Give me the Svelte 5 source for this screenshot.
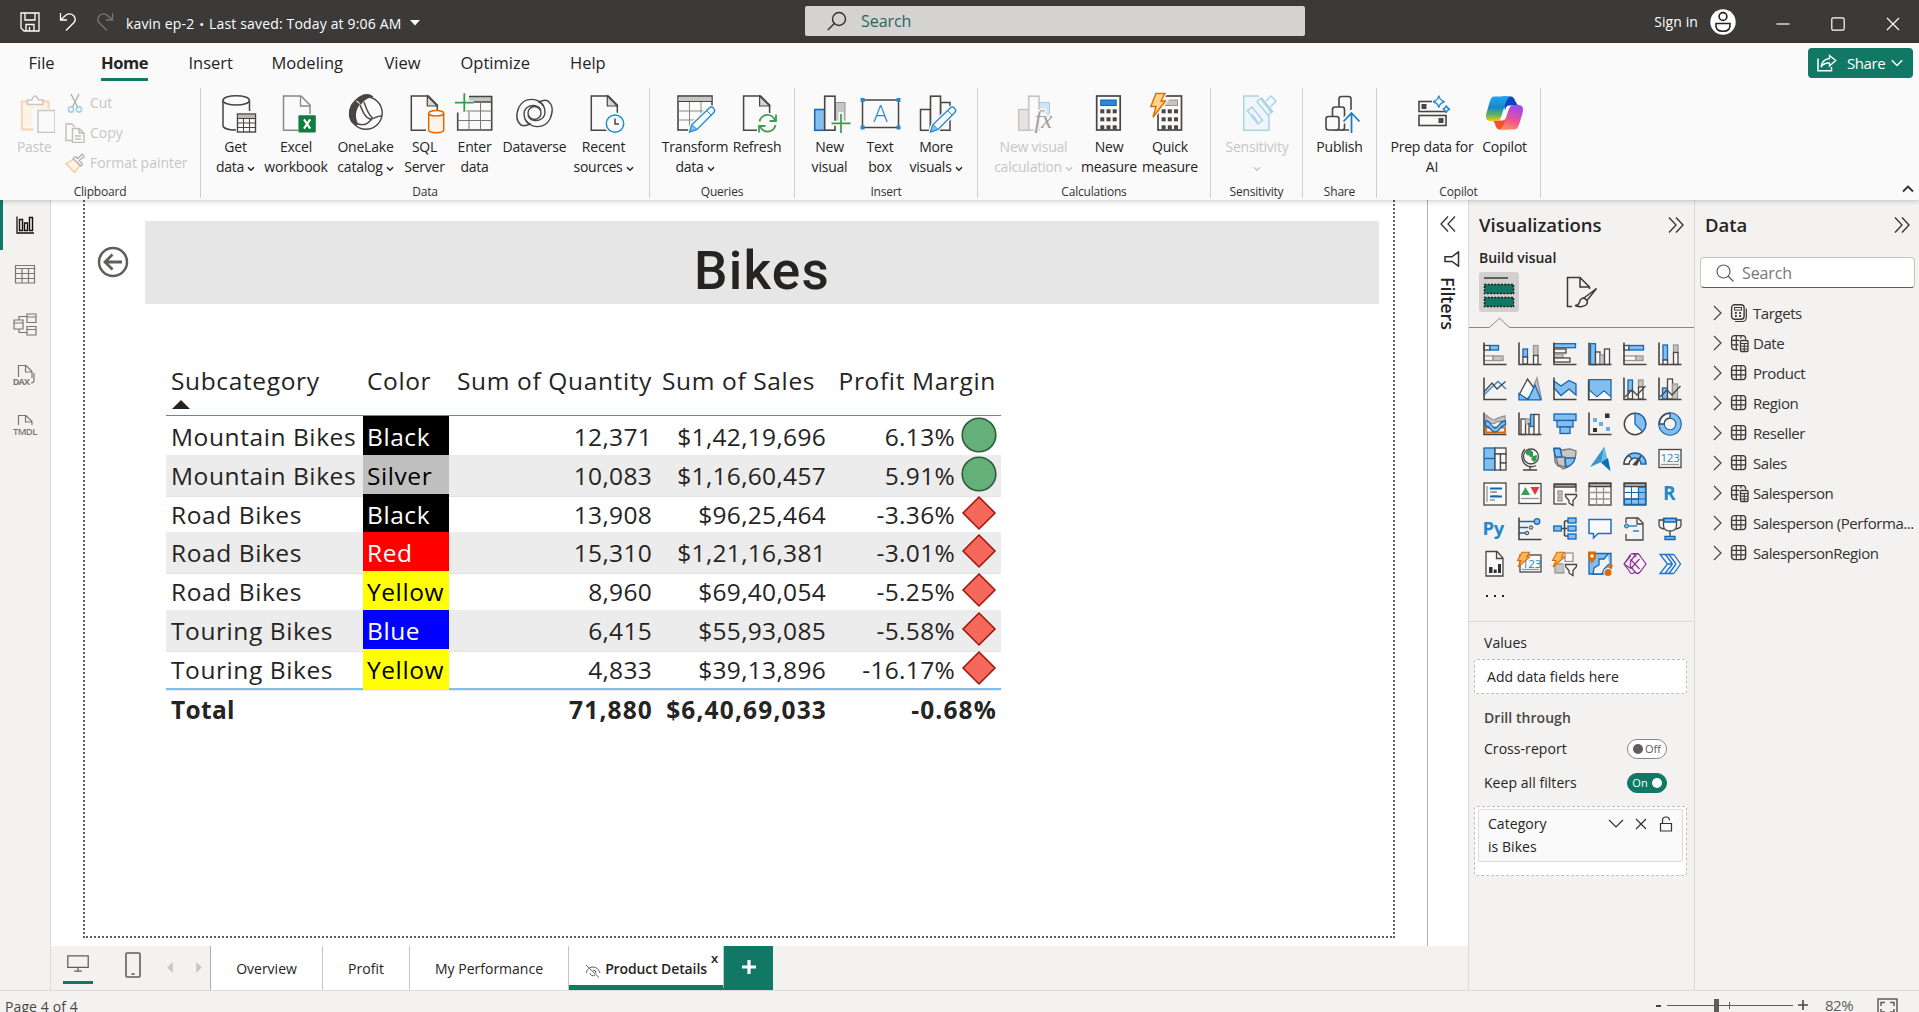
<script>
  const D = '#484644', B = '#1467b3', F = '#83beec', G = '#c8c6c4', N = '#979593', L = '#fafafa';
  const page = (x) => `<path d="M${x} 3H${x + 17}L${x + 26} 12V37.3H${x}Z" fill="${L}" stroke="${D}" stroke-width="1.5"/><path d="M${x + 16} 3V13H${x + 26}Z" fill="#d8d6d4" stroke="${D}" stroke-width="1.2"/>`;
  const pencil = `<path d="M14.5 39l2.5-7.5L34 15.2a3 3 0 0 1 4.6 4.6L22 36.5Z" fill="${L}" stroke="${L}" stroke-width="4"/><path d="M14.5 39l2.5-7.5L34 15.2a3 3 0 0 1 4.6 4.6L22 36.5Z" fill="${L}" stroke="#1e8bcd" stroke-width="1.3"/><path d="M14.5 39l2.5-7.5 5 5Z" fill="${F}" stroke="#1e8bcd"/><path d="M31.5 17.5l4.8 4.8" stroke="#1e8bcd"/>`;
  const calc = (x, w, c) => `<rect x="${x}" y="3" width="${w}" height="34" fill="${L}" stroke="${D}" stroke-width="1.7"/><rect x="${x + 4}" y="7" width="${w - 8}" height="5.5" fill="${c}" stroke="${c === G ? N : '#1267b4'}"/>` +
    [0, 1, 2].map(r => [0, 1, 2].map(k => `<rect x="${x + 3.6 + k * 6.2}" y="${16.3 + r * 8}" width="4" height="4" fill="${D}"/>`).join('')).join('');
  const bolt = `<path d="M6 0.5H15L11 8H15.5L3 24.3 6 13.5H0.8Z" fill="#fcd58a" stroke="#fafafa" stroke-width="4"/><path d="M6 0.5H15L11 8H15.5L3 24.3 6 13.5H0.8Z" fill="#fcd58a" stroke="#dd6b00" stroke-width="1.4"/>`;

  const ribbonIcons = {
    getdata: `<path d="M7 7.2V32.5c0 2.6 5 4.5 13 4.6M33.5 7.2V18" fill="none" stroke="${D}" stroke-width="1.5"/><ellipse cx="20.2" cy="7.4" rx="13.2" ry="4.7" fill="${L}" stroke="${D}" stroke-width="1.5"/><rect x="21.5" y="21" width="18" height="18" fill="${L}" stroke="${D}" stroke-width="1.4"/><path d="M22 22h17v3H22z" fill="#bbb"/><path d="M21.5 25.5h18M21.5 30h18M21.5 34.5h18M27.5 25v14M33.5 25v14" stroke="${D}"/>`,
    excel: `<path d="M22 37.3H7.5V3H25L34 12V21" fill="none" stroke="#8a8886" stroke-width="1.5"/><path d="M24.5 3V13H34" fill="none" stroke="#8a8886" stroke-width="1.3"/><rect x="22.4" y="22.2" width="17.4" height="17.4" rx="1" fill="#107c41"/><path d="M28 26.3l6.2 9.4M34.2 26.3L28 35.7" stroke="#fff" stroke-width="2.1"/>`,
    onelake: `<circle cx="20" cy="20" r="16.2" fill="${L}" stroke="${D}" stroke-width="1.4"/><path d="M10 6.5C15 .5 24-.8 27.5 4 22.5 4.5 17.5 7 15 12c-1.8-3.5-4-4-5-5.5Z" fill="${D}"/><path d="M10 8C4 12 .8 20 4.5 28 7 31.5 9.5 33 12.5 31.5 8.500 24 9.500 17.500 14 11 11.500 10 11.500 9 10 8Z" fill="${D}"/><path d="M14 12c3 7 5.500 13 10 14 5 0 7-3.500 12-3M18 9c2 6 4 12.500 8.500 16M12 31c8 2 10-1 14-5" fill="none" stroke="${D}" stroke-width="1.4"/>`,
    sql: page(6.3) + `<path d="M21 18h20v22H21z" fill="${L}"/><path d="M23.7 20v17c0 3.5 15 3.5 15 0V20" fill="#fbf4ec" stroke="#dd6b00" stroke-width="1.5"/><ellipse cx="31.2" cy="20.3" rx="7.5" ry="2.8" fill="${L}" stroke="#dd6b00" stroke-width="1.5"/>`,
    enter: `<rect x="2.7" y="3.5" width="34" height="33.5" fill="${L}"/><path d="M14 3.5H36.7V9H14z" fill="${G}"/><path d="M2.7 19.5V37H36.7V3.5H14M18 9H36.7" fill="none" stroke="${D}" stroke-width="1.6"/><path d="M2.7 27.5h34M10 18h26.7M14 19v18M25.5 9v28" stroke="#797775" fill="none"/><path d="M9.3.5v18.5M0 9.7h18.5" stroke="${L}" stroke-width="4"/><path d="M9.3.3v18.5M0 9.7h18.5" stroke="#2fa04b" stroke-width="1.8"/>`,
    dataverse: `<g fill="none" stroke="${D}" stroke-width="1.4"><circle cx="19.5" cy="20" r="6.5"/><path d="M28.5 13C24 5 10 3 4 14c-3 7-3 14 2 18 3 1.5 6 .5 9-1C8 28 7.5 18 12 14.5c5-3.5 12-2.5 14 3"/><path d="M10.5 27c4.5 8 18.5 10 24.5-1 3-7 3-14-2-18-3-1.5-6-.5-9 1 7 3 7.5 13 3 16.5-5 3.5-12 2.5-14-3"/></g>`,
    recent: page(7.3) + `<circle cx="31" cy="30.6" r="11" fill="${L}"/><circle cx="31" cy="30.6" r="8.7" fill="${L}" stroke="#1e8bcd" stroke-width="1.5"/><path d="M31 25.5v5.5h4" fill="none" stroke="${D}" stroke-width="1.5"/>`,
    transform: `<rect x="3" y="3" width="34" height="34" fill="${L}" stroke="${D}" stroke-width="1.6"/><path d="M3.5 4h33v4h-33z" fill="${G}"/><path d="M3 8.5h34" stroke="${D}"/><path d="M3 18h34M3 27h34M14.5 9v28M26 9v28" stroke="#8a8886"/><path d="M38 20v20H20z" fill="${L}"/>${pencil}`,
    refresh: page(6.6) + `<path d="M20 20h21v21H20z" fill="${L}"/><path d="M22.5 28.5a8 8 0 0 1 15.5-1M39 21.5v6.5h-6.5M38.5 32a8 8 0 0 1-15.5 1M22 39.5V33h6.5" fill="none" stroke="#3f9c52" stroke-width="1.8"/>`,
    newvisual: `<rect x="4.7" y="16.5" width="10" height="20.8" fill="${F}" stroke="${B}" stroke-width="1.5"/><rect x="25" y="9.5" width="10" height="20" fill="${G}" stroke="${N}"/><rect x="14.7" y="3.2" width="10.3" height="34" fill="${L}" stroke="${D}" stroke-width="1.6"/><path d="M31 19v22M20 30.3h22" stroke="${L}" stroke-width="5"/><path d="M31 21v19M21.5 30.3h19" stroke="#2fa04b" stroke-width="1.7"/>`,
    textbox: `<rect x="2.5" y="7" width="36" height="27.5" fill="${L}" stroke="${D}" stroke-width="1.5"/><text x="20.3" y="29" font-size="24" font-family="Open Sans" font-weight="300" text-anchor="middle" fill="#1e8bcd">A</text><path d="M.6 5h4v4h-4zM36.5 5h4v4h-4zM.6 32.5h4v4h-4zM36.5 32.5h4v4h-4z" fill="#1e8bcd"/>`,
    morevisuals: `<rect x="4.5" y="16.5" width="10" height="20.8" fill="${L}" stroke="${D}" stroke-width="1.5"/><path d="M24.5 9.5H34V37.2H24.5z" fill="${L}" stroke="${D}" stroke-width="1.5"/><rect x="14.5" y="3.2" width="10" height="34" fill="${L}" stroke="${D}" stroke-width="1.6"/>${pencil}`,
    newcalc: `<rect x="4.7" y="16.5" width="10.3" height="20.8" fill="#e5e4e3" stroke="${G}" stroke-width="1.5"/><rect x="25" y="9.5" width="10.5" height="14" fill="#cfe4f5" stroke="#a9cde6"/><rect x="14.7" y="3.2" width="10.3" height="34" fill="${L}" stroke="${G}" stroke-width="1.6"/><text x="20.5" y="34.5" font-size="25" font-family="Liberation Serif" font-style="italic" fill="#a19f9d" stroke="${L}" stroke-width="3" paint-order="stroke">fx</text>`,
    newmeasure: calc(7.7, 23.5, '#2b88d8'),
    quick: calc(8, 23.5, G) + bolt,
    sensitivity: `<path d="M22 3H6.700V37.300H32V22" fill="#eef6fb" stroke="#acd2e8" stroke-width="1.5"/><g fill="none" stroke="#acd2e8" stroke-width="1.5"><rect x="9.500" y="19.500" width="17" height="6" transform="rotate(52 18 22.500)"/><path d="M15 21.500l6 8"/><path d="M20 8.500l4.500-3.500 11 13.500-4.500 3.500ZM29 8l5-5 5 5-5.500 6" fill="#f3f9fc"/></g><path d="M23 6l2-1.500 10.500 13.500-2 1.500z" fill="#acd2e8"/>`,
    publish: `<g fill="${L}" stroke="${D}" stroke-width="1.6"><rect x="19" y="3.5" width="12" height="33.5" rx="2.5"/><rect x="12.5" y="14" width="12" height="23" rx="2.5"/><rect x="6" y="23.5" width="13" height="13.5" rx="2.5"/></g><path d="M31.5 17v23M22 29.500l9.500-9.500 9.500 9.500" fill="none" stroke="${L}" stroke-width="5"/><path d="M31.5 20v20M23.5 28.5l8-8.5 8 8.5" fill="none" stroke="#1a7fc1" stroke-width="1.8"/>`,
    prep: `<g fill="${L}" stroke="${D}" stroke-width="1.6"><rect x="7" y="8.5" width="27" height="10"/><rect x="7" y="22.5" width="27" height="10"/></g><path d="M9.5 11h5v5h-5zM26.5 25h5v5h-5z" fill="${D}"/><path d="M20 0h20v17.8H30L25 15h-5z" fill="${L}"/><path d="M26.8 2.7q1 5 5.8 6-4.8 1-5.8 6-1-5-5.8-6 4.8-1 5.8-6zM34.3 12.5q.6 3 3.6 3.700-3 .6-3.600 3.600-.6-3-3.600-3.600 3-.7 3.600-3.700z" fill="${L}" stroke="#2b8fd6" stroke-width="1.4"/>`,
    copilot: `<defs><linearGradient id="ca" x1="0" y1="0" x2="0" y2="1"><stop offset="0" stop-color="#1ba5f5"/><stop offset=".45" stop-color="#1988c8"/><stop offset=".75" stop-color="#5fb35a"/><stop offset="1" stop-color="#fbc80e"/></linearGradient><linearGradient id="cb" x1=".3" y1="0" x2="0" y2="1"><stop offset="0" stop-color="#a54be8"/><stop offset=".5" stop-color="#ee5097"/><stop offset="1" stop-color="#fd9d53"/></linearGradient></defs><path d="M17 3.5h9c4 0 4.5 8 8 9h-9c-4 0-4 2-5 5z" fill="#1145c0"/><path d="M23 36.5h-9c-4 0-3.5-9-7-9h9c4 0 5-2 6-5z" fill="#f2542d"/><path d="M9.5 3.5H25c-4 2-5 9-8 18-2 6-3 6.5-8 6.5H5.5C.5 28 .5 24 1.5 20l3-10.5C6 5 7 3.5 9.500 3.500Z" fill="url(#ca)"/><path d="M29 36.500H15c4-2 5-9 8-18 2-5.500 3-6.500 7-6.500h3.500c5 0 5 4 4 8.500L34.500 30C33 35 31.500 36.500 29 36.500Z" fill="url(#cb)"/>`,
  };

  const groups = [
    { name: 'Data', w: 449, pad: 6, items: [
      ['getdata', ['Get', 'data'], 57, 1], ['excel', ['Excel', 'workbook'], 64], ['onelake', ['OneLake', 'catalog'], 75, 1], ['sql', ['SQL', 'Server'], 43],
      ['enter', ['Enter', 'data'], 57], ['dataverse', ['Dataverse'], 63], ['recent', ['Recent', 'sources'], 75, 1]] },
    { name: 'Queries', w: 145, pad: 10, items: [['transform', ['Transform', 'data'], 70, 1], ['refresh', ['Refresh'], 54]] },
    { name: 'Insert', w: 183, pad: 8, items: [['newvisual', ['New', 'visual'], 53], ['textbox', ['Text', 'box'], 48], ['morevisuals', ['More', 'visuals'], 64, 1]] },
    { name: 'Calculations', w: 233, pad: 8, items: [['newcalc', ['New visual', 'calculation'], 95, 1, 1], ['newmeasure', ['New', 'measure'], 56], ['quick', ['Quick', 'measure'], 66]] },
    { name: 'Sensitivity', w: 92, pad: 0, items: [['sensitivity', ['Sensitivity', ''], 92, 1, 1]] },
    { name: 'Share', w: 74, pad: 0, items: [['publish', ['Publish'], 73]] },
    { name: 'Copilot', w: 164, pad: 10, items: [['prep', ['Prep data for', 'AI'], 90], ['copilot', ['Copilot'], 55]] },
  ];

  const tabs = [['File', 72.5], ['Home', 87.5], ['Insert', 83], ['Modeling', 113], ['View', 76], ['Optimize', 109.5], ['Help', 60]];

  const ax = `<path d="M1 .5V22.5H23.5" fill="none" stroke="${D}" stroke-width="1.6"/>`;
  const r = (x, y, w, h, f = L, s = D) => `<rect x="${x}" y="${y}" width="${w}" height="${h}" fill="${f}" stroke="${s}" stroke-width="1.3"/>`;
  const p = (d, f = 'none', s = D, w = 1.3) => `<path d="${d}" fill="${f}" stroke="${s}" stroke-width="${w}"/>`;
  const txt = (x, y, s, t, w = 400, a = 'middle', c = '#2488c8') => `<text x="${x}" y="${y}" font-size="${s}" font-weight="${w}" font-family="Open Sans" text-anchor="${a}" fill="${c}">${t}</text>`;
  const sbolt = `<path d="M4 .2H11.5L8.5 5H11.5L0 15 3 8.5H-.5Z" fill="#fbb65a" stroke="#dd6b00" stroke-width="1.1"/>`;
  const funnel = p('M12.5 12.5H23.5V14.5L20 18.5V23.5L16 21V18.5L12.5 14.5Z', L);
  const visuals = [
    r(1, 3.5, 6, 4.5) + r(7, 3.5, 8.5, 4.5, F, B) + r(1, 14, 9, 4.5, L, N) + r(10, 14, 10, 4.5, G, N) + ax,
    r(5, 7, 4.5, 8, F, B) + r(5, 15, 4.5, 7) + r(15.5, 3.5, 4.5, 10, G, N) + r(15.5, 13.5, 4.5, 9) + ax,
    r(1, 1.7, 21.5, 4, F, B) + r(1, 7, 12, 4) + r(1, 12, 9, 4, G, N) + r(1, 16, 16, 4) + ax,
    r(2.5, 1.7, 5, 21, F, B) + r(7.5, 10, 4.5, 12.5) + r(12, 13, 4.5, 9.5, G, N) + r(16.5, 7, 5, 15.5) + ax,
    r(1, 3.5, 5, 4.5) + r(6, 3.5, 14.5, 4.5, F, B) + r(1, 14, 12, 4.5, L, N) + r(13, 14, 7, 4.5, G, N) + ax,
    r(5, 3, 4.5, 15, F, B) + r(5, 18, 4.5, 4.5) + r(15.5, 3, 4.5, 7.5, G, N) + r(15.5, 10.5, 4.5, 12) + ax,
    p('M1 18L9 10 15 4.5 23 12', 'none', '#2b88d8') + p('M1 15L9 6 14 12 22.5 4.5') + ax,
    p('M16 8L19 1 23.5 22H14Z', G, N) + p('M1 18L9.5 2 18 14 9 22Z', L) + p('M1 16.5L10 22.5 17 8 23 22.8H1Z', F, B),
    p('M1 4L8 9 16 3.5 23 7V18L16 12 8 18.5 1 11Z', F, B) + ax,
    p('M1 2.7H23V20L16 14 9 20 1 13Z', F, B) + p('M1 13L9 20 16 14 23 20V22.5H1Z', L, B, 1) + p('M.6 3V22.7H23.5', 'none', D, 1.5),
    r(5, 3, 4.5, 11, F, B) + r(5, 14, 4.5, 8) + r(15.5, 3, 4.5, 7, G, N) + r(15.5, 10, 4.5, 12) + p('M2 20L9 13 14 18 22.5 9') + ax,
    r(4.5, 11, 5, 11, F, B) + r(9.5, 2, 5, 20) + r(14.5, 7, 5, 15, G, N) + p('M2 20L9 13 14 18 22.5 9') + ax,
    p('M3 15.5H22V20.5H3z', 'none', '#dd6b00', 1.8) + p('M3 3Q10 9 12 7.5T22 4V9Q14 9 12 11T3 9Z', G, N) + p('M2.5 9C8 8 8 16 12 16S16 9 22.5 9V13C17 13 17 20 12 20S8 14 2.5 14Z', F, B) + ax,
    r(3, 7, 4.5, 15.5) + r(7.5, 7, 5, 5, G, N) + r(12.5, 2.5, 4, 12, F, B) + r(16, 2.5, 5, 20) + p('M11 11V22') + ax,
    r(1, 2, 22, 6.5, F, B) + r(4, 8.5, 16, 6.5, F, B) + r(7, 15, 10, 6.5, F, B),
    `<path d="M5 6h4v4H5zM11 10h4v4h-4zM18 15h4v4h-4z" fill="#6aade4"/><path d="M17 1.5h4.5V6H17zM5 16h4v4H5z" fill="#323130"/>` + ax,
    `<circle cx="12" cy="12" r="10.7" fill="${L}" stroke="${D}" stroke-width="1.5"/>` + p('M12 1.3A10.7 10.7 0 0 1 19.5 19.6L12 12Z', F, B),
    `<circle cx="12" cy="12" r="8.5" fill="none" stroke="${B}" stroke-width="6.6"/><circle cx="12" cy="12" r="8.5" fill="none" stroke="${F}" stroke-width="4.3"/>` + p('M1.3 12A10.7 10.7 0 0 1 12 1.3V6A6 6 0 0 0 6 12Z', L),
    r(1, 1, 11, 22, F, B) + p('M1 11.5H12', 'none', B) + r(12, 1, 11, 6) + r(12, 7, 5.5, 16) + r(17.5, 7, 5.5, 9) + r(17.5, 16, 5.5, 7),
    `<circle cx="13" cy="9.5" r="7.5" fill="${L}" stroke="${D}" stroke-width="1.3"/><path d="M12 2.5c-5 1-5 5-2 6 1-1 2 1 2 2l3-1V5ZM15 9l4-1c0 4-1 6-3 7l-3-3Z" fill="#2f9a48"/>` + p('M7 2C2 7 3 17 11 19.5 13 20 15 20 18 18.5M12 20V23M5 23H19'),
    p('M1 1.5H6L9 3 17 2 23 4C23 15 17 20 10 22L8 20 5 19 2 15Z', G, '#797775') + p('M1 1.5H7L9 10H3Z', F, B) + p('M3 10H12V20L9 19 5 18Z', G, '#797775') + p('M12 11H22Q21 18 13 20ZM1 1.5H7L9 10H3Q1 6 1 1.5', F, B),
    `<path d="M16.5-.5L2 20 13.5 15Z" fill="#3a95c9"/><path d="M16.5-.5L13 15 22 24Z" fill="#60c0e6"/><path d="M13 15.5L20 11 22.5 24Z" fill="#0f6cbd"/>`,
    p('M1 17A11 11 0 0 1 23 17H18A6 6 0 0 0 6 17Z', F, B, 1.5) + p('M1 17A11 11 0 0 1 6 8.5L9 12A6 6 0 0 0 6 17Z', L) + p('M10.5 17.5L18 9 13.5 18Z', D),
    r(1, 2.5, 22, 18) + txt(12, 15, 11.5, '123') + p('M3 17.5H21', 'none', N),
    r(1, 1, 22, 22) + p('M4 4V20M9 14H15M9 10H14', 'none', N) + p('M7 6.5H19M7 14.5H19', 'none', B, 2) + p('M7 10H13M7 18H12', 'none', N),
    r(1, 1.5, 22, 20) + `<path d="M3 13L7.5 5 12 13Z" fill="#3f9c52"/><path d="M12.5 5H21.5L17 13Z" fill="#e03a3a"/>` + p('M3 16.5H21', 'none', N),
    r(1, 2, 22, 20) + p('M1.5 2.5H22.5V5H1.5Z', G) + r(5, 9, 4, 4, G, N) + r(5, 15, 4, 4, G, N) + p('M11 11H25V25H15Z', '#f3f2f1', '#f3f2f1') + funnel,
    r(1, 1, 22, 22) + p('M1.5 1.5H22.5V4.5H1.5Z', G) + p('M1 10.5H23M1 17H23M8.5 5V23M15.5 5V23', 'none', N),
    r(1, 1, 22, 22) + p('M15.5 5H22.5V22.5H1.5V17H15.5Z', F, B) + p('M1.5 1.5H22.5V4.5H1.5Z', G) + p('M1 10.5H23M1 17H23M8.5 5V23M15.5 5V23', 'none', B, 1),
    txt(11, 18, 19, 'R', 700),
    txt(-0.5, 17.5, 18.5, 'Py', 700, 'start'),
    p('M1 4.5H16M1 10.5H10M1 16H7', 'none', B) + `<circle cx="19" cy="4.5" r="2.8" fill="${F}" stroke="${B}" stroke-width="1.3"/><circle cx="13" cy="10.5" r="1.8" fill="${G}" stroke="${D}"/><circle cx="9" cy="16" r="1.8" fill="${G}" stroke="${D}"/>` + ax,
    p('M8 11.5H14M11.5 4V19M11.5 4H16M11.5 19H16', 'none', D, 1.6) + r(0.8, 9, 7.5, 5, F, B) + r(15, 1, 8, 5, F, B) + r(15, 9, 8, 5, F, B) + r(15, 17, 8, 5, F, B),
    p('M1 2.5H23V16.5H10L5.5 21V16.5H1Z', L, '#1e6fc0', 1.5),
    p('M3 1H15L20 6V23H3V17M3 6V1M14 1V7H20') + p('M6 9H14M10 14H16M3 9H1', 'none', '#1e8bcd', 1.5) + `<circle cx="3.5" cy="9" r="2" fill="${F}" stroke="${B}"/>`,
    p('M5 3H1V8Q1 11 6 12M19 3H23V8Q23 11 18 12') + p('M5.5 1.5H18.5V9Q18 14 12 14 6 14 5.5 9Z', L) + p('M6 1.5H18V5H6z', F, B) + p('M12 14V20') + p('M7 19.5H17V22.5H7z', F, B),
    p('M3 -.5H14L20 6V24H3ZM13.5 -.5V6.5H20', L) + `<path d="M6 15h3.5v6H6zM10.7 17.5h3v3.5h-3zM15 12h3v9h-3z" fill="#323130"/>`,
    r(2, 3, 21, 17) + txt(13.5, 15.5, 11.5, '123') + p('M4 17.5H21', 'none', N) + sbolt,
    r(12, 1, 8, 8.500, L, N) + r(2, 12, 9, 9, G, N) + p('M11 11H25V25H13Z', '#f3f2f1', '#f3f2f1') + funnel + sbolt,
    p('M1 1.5H23V22H1Z', F, B) + p('M20 2L16 7H11V13L6 16 5 22H14L16 17 21 12', '#f3f2f1', B) + `<path d="M0 -.5H8V6L4 11.5 0 6Z" fill="#dd6b00"/><circle cx="4" cy="4" r="1.7" fill="#fff"/><circle cx="20" cy="20.5" r="4.500" fill="#f3f2f1"/><circle cx="20" cy="20.5" r="3.5" fill="#dd6b00"/><circle cx="22.5" cy="14" r="2.2" fill="#dd6b00"/>`,
    `<g fill="#f8f2f9" stroke="#8b2f95" stroke-width="1.2"><path d="M9.500 1.500L15 1.500 17 4 7 16 1 12ZM1 12L7.500 2.500 M1 12L8 21.500H10L12.500 19.500"/><path d="M7.500 2.500Q9 1 11 2.500L16.500 9.500 12 15 M16 2.500Q14.500 1 13 2.500L7.500 9 16.500 20.500"/><path d="M16 2.500L23 12 16.500 20.500Q14.500 22.500 12.500 20.500L7.500 14.500Q6.500 12 8 10.500"/><path d="M7.500 7.500L12 12 7.500 17M16.500 7L12 12 16.500 17" fill="none"/></g>`,
    `<g fill="none" stroke="#1a73cf" stroke-width="1.300"><path d="M2 2.500H15Q16 2.500 17 4L22.500 12 17 20Q16 21.500 15 21.500H2L9.500 12Z"/><path d="M7.500 2.500L14.500 12M11 2.500L18 12M14.500 12L7 21.500M18 12L11 21.500M9.500 12H14.500"/></g>`,
  ];

  const rows = [
    ['Mountain Bikes', 'Black', '12,371', '$1,42,19,696', '6.13%', true],
    ['Mountain Bikes', 'Silver', '10,083', '$1,16,60,457', '5.91%', true],
    ['Road Bikes', 'Black', '13,908', '$96,25,464', '-3.36%', false],
    ['Road Bikes', 'Red', '15,310', '$1,21,16,381', '-3.01%', false],
    ['Road Bikes', 'Yellow', '8,960', '$69,40,054', '-5.25%', false],
    ['Touring Bikes', 'Blue', '6,415', '$55,93,085', '-5.58%', false],
    ['Touring Bikes', 'Yellow', '4,833', '$39,13,896', '-16.17%', false],
  ];

  const fields = [['Targets', 'm'], ['Date', 'c'], ['Product', 't'], ['Region', 't'], ['Reseller', 't'], ['Sales', 't'], ['Salesperson', 'c'], ['Salesperson (Performa...', 't'], ['SalespersonRegion', 't']];
  const K = '#3b3a39';
  const fieldIcons = {
    t: `<rect x="1.6" y="1.6" width="14" height="14" rx="3" fill="none" stroke="${K}" stroke-width="1.4"/><path d="M6.3 1.5v14M10.9 1.5v14M1.5 6.3h14M1.5 10.9h14" stroke="${K}" stroke-width="1.2"/>`,
    c: `<path d="M8 15.6H4.6a3 3 0 0 1-3-3V4.6a3 3 0 0 1 3-3h8a3 3 0 0 1 3 3V5.5M6.3 1.5v14M10.9 1.5v3M1.5 6.3h8M1.5 10.9h7" fill="none" stroke="${K}" stroke-width="1.3"/><rect x="10.5" y="6.5" width="7.5" height="11" rx="1" fill="#f3f2f1" stroke="${K}" stroke-width="1.3"/><path d="M11 9.5h7M11 12.3h7M11 15h7M14.3 9.5v8" stroke="${K}" stroke-width="1.1"/>`,
    m: `<rect x="1.6" y=".8" width="12.5" height="14.5" rx="3" fill="none" stroke="${K}" stroke-width="1.4"/><rect x="4.5" y="3.5" width="7" height="2.6" fill="none" stroke="${K}"/><path d="M5 9h1.8M9.2 9H11M5 12h1.8M9.2 12H11" stroke="${K}" stroke-width="1.8"/><path d="M16.3 4.5v9a4 4 0 0 1-4 4H5" fill="none" stroke="${K}" stroke-width="1.2"/>`,
  };
  const pagesList = [['Overview', 112], ['Profit', 87], ['My Performance', 159]];
</script>

{#snippet chev(cls)}<svg class="chev {cls}" viewBox="0 0 8 6"><path d="M1 1.2l3 3 3-3" fill="none" stroke="currentColor" stroke-width="1.5" /></svg>{/snippet}

<div class="app">
  <header class="title">
    <div class="quick">
      <svg class="save" viewBox="0 0 20 20"><path d="M1 1H19V19H4L1 16ZM5 1V8H15V1M6 19V12.5H14V19M9.5 15V19" fill="none" stroke="#fff" stroke-width="1.3" /></svg>
      <svg class="undo" viewBox="0 0 18 20"><path d="M1.5 1V8H8M1.5 8L7 3Q11 .5 14.5 3.5 18 7.5 14.5 11L7 18.5" fill="none" stroke="#fff" stroke-width="1.3" /></svg>
      <svg class="redo" viewBox="0 0 18 20"><path d="M16.5 1V8H10M16.5 8L11 3Q7 .5 3.5 3.5 0 7.5 3.5 11L11 18.5" fill="none" stroke="#797775" stroke-width="1.3" /></svg>
      <span class="file">kavin ep-2 <i>•</i> Last saved: Today at 9:06 AM</span>
      <svg class="caret" viewBox="0 0 10 6"><path d="M0 0H10L5 5.5Z" fill="#fff" /></svg>
    </div>
    <div class="tsearch">
      <svg viewBox="0 0 20 20"><circle cx="12" cy="8" r="6.5" fill="none" stroke="#323130" stroke-width="1.4" /><path d="M7.3 12.5L.8 19" stroke="#323130" stroke-width="1.4" /></svg>
      <span>Search</span>
    </div>
    <div class="win">
      <span>Sign in</span>
      <svg class="avatar" viewBox="0 0 26 26"><circle cx="13" cy="13" r="12.7" fill="#fff" /><circle cx="13" cy="7.5" r="3.9" fill="none" stroke="#252423" stroke-width="1.6" /><path d="M6 14.5H20Q21 22.3 13 22.3 5 22.3 6 14.5Z" fill="none" stroke="#252423" stroke-width="1.6" /></svg>
      <svg class="wmin" viewBox="0 0 14 14"><path d="M.5 7H13.5" stroke="#fff" stroke-width="1.2" /></svg>
      <svg class="wmax" viewBox="0 0 14 14"><rect x=".8" y=".8" width="12.4" height="12.4" rx="1.5" fill="none" stroke="#fff" stroke-width="1.2" /></svg>
      <svg class="wclose" viewBox="0 0 14 14"><path d="M1 1L13 13M13 1L1 13" stroke="#fff" stroke-width="1.2" /></svg>
    </div>
  </header>

  <div class="top">
    <nav class="tabs">
      {#each tabs as [t, w]}
        <div class="tab" style:width="{w}px"><span class:on={t === 'Home'}>{t}</span></div>
      {/each}
      <button class="share">
        <svg class="shicon" viewBox="0 0 20 18"><path d="M1 4.5V16.8H14.5V13" fill="none" stroke="#fff" stroke-width="1.5" /><path d="M12.5 1.5L18.7 6.5 12.5 12V9Q7 8.5 4 13 5 5.5 12.5 4.5Z" fill="none" stroke="#fff" stroke-width="1.4" /></svg>
        <span>Share</span>
        <svg class="shchev" viewBox="0 0 12 8"><path d="M.8 1.2L6 6.5 11.2 1.2" fill="none" stroke="#fff" stroke-width="1.4" /></svg>
      </button>
    </nav>

    <div class="ribbon">
      <section class="clip">
        <div class="clipbody">
          <div class="paste">
            <svg viewBox="0 0 40 40"><path d="M18 36.5H7V8.5H33.5V16" fill="none" stroke="#f7d9b8" stroke-width="2.4" /><path d="M8.5 10H32v6H17v18H8.5z" fill="#fbf3e6" /><path d="M12.5 11.5V7H17Q18 3 20 3T23.5 7H28V11.5Z" fill="#fafafa" stroke="#c8c6c4" stroke-width="1.4" /><rect x="23" y="17.5" width="17" height="22" fill="#fafafa" stroke="#c8c6c4" stroke-width="1.5" /></svg>
            <span>Paste</span>
          </div>
          <div class="cmds">
            <div><svg viewBox="0 0 20 20"><path d="M6 1L12.5 14M14 1L7.5 14" stroke="#b3b0ad" stroke-width="1.4" /><circle cx="6" cy="16.5" r="2.6" fill="none" stroke="#a6cfe6" stroke-width="1.6" /><circle cx="14" cy="16.5" r="2.6" fill="none" stroke="#a6cfe6" stroke-width="1.6" /></svg>Cut</div>
            <div><svg viewBox="0 0 20 20"><path d="M7 17.5H1V1H7L10 4" fill="none" stroke="#c0bebc" stroke-width="1.4" /><path d="M7.5 5.5H14L19 10V19.5H7.5ZM14 5.5V10H19M10 13h6M10 16h6" fill="none" stroke="#c0bebc" stroke-width="1.4" /></svg>Copy</div>
            <div><svg viewBox="0 0 20 20"><path d="M1 10.5Q6 9 8.5 6L15 12.5Q12 16 9.5 19.5Z" fill="#fdf3e7" stroke="#f3cda3" stroke-width="1.4" /><path d="M8 5.5L16 13 17.5 11 14 7.5 19 3.5 17.5 1 12.5 5.5 10.5 3.5Z" fill="#fafafa" stroke="#b3b0ad" stroke-width="1.3" /></svg>Format painter</div>
          </div>
        </div>
        <h6>Clipboard</h6>
      </section>
      {#each groups as g}
        <section class="grp" style:width="{g.w}px">
          <div class="items" style:padding-left="{g.pad}px">
            {#each g.items as [icon, lines, w, drop, off]}
              <div class="btn" class:off style:width="{w}px">
                <svg class="ico" viewBox="0 0 40 40">{@html ribbonIcons[icon]}</svg>
                <span>{lines[0]}</span>
                {#if lines.length > 1}<span>{lines[1]}{#if drop}{@render chev(lines[1] ? '' : 'solo')}{/if}</span>{/if}
              </div>
            {/each}
          </div>
          <h6>{g.name}</h6>
        </section>
      {/each}
      <svg class="collapse" viewBox="0 0 12 8"><path d="M1 6.5L6 1.5 11 6.5" fill="none" stroke="#323130" stroke-width="1.9" /></svg>
    </div>
  </div>

  <div class="main">
    <aside class="rail">
      <div class="mode active"><svg viewBox="0 0 24 24"><path d="M4 3.5V20H21" fill="none" stroke="#111" stroke-width="1.3" /><path d="M6.5 6.5h3v11h-3zM11.5 10h3v7.5h-3zM16.5 4.5h3v13h-3z" fill="none" stroke="#111" stroke-width="1.4" /></svg></div>
      <div class="mode"><svg viewBox="0 0 24 24"><path d="M2.5 2.500h19v17.500h-19zM2.500 5.500h19M2.500 10.500h19M2.500 15.500h19M9 5.500v14.500M15.500 5.500v14.500" fill="none" stroke="#797775" stroke-width="1.2" /></svg></div>
      <div class="mode"><svg viewBox="0 0 24 24"><path d="M1 7h9v9H1zM1 10h9M14 1h9v8.500h-9zM14 4h9M14 13.500h9v8.500h-9zM14 16.500h9M6 7V3.500h8M6 16V19.500h8" fill="none" stroke="#797775" stroke-width="1.2" /></svg></div>
      <div class="mode"><svg viewBox="0 0 24 24"><path d="M5.5 14V2.5H13L19 8.5V15M12.5 2.5V9H19M21 10v7q0 3-3 3" fill="none" stroke="#797775" stroke-width="1.2" /><text x="-.3" y="21.5" font-size="9" font-weight="700" font-family="Open Sans" fill="#797775" textLength="17">DAX</text></svg></div>
      <div class="mode"><svg viewBox="0 0 24 24"><path d="M5.5 12V2.5H13L19 8.5V12M12.5 2.5V9H19" fill="none" stroke="#797775" stroke-width="1.2" /><text x="0" y="22" font-size="9.500" font-weight="600" font-family="Open Sans" fill="#797775" textLength="24">TMDL</text></svg></div>
    </aside>

    <div class="center">
      <div class="stage">
        <div class="canvas">
          <div class="headrow">
            <svg class="back" viewBox="0 0 32 32"><circle cx="16" cy="16" r="14" fill="none" stroke="#605e5c" stroke-width="2.5" /><path d="M25 16H8M15.5 8.5L8 16l7.5 7.5" fill="none" stroke="#605e5c" stroke-width="2.8" /></svg>
            <h1>Bikes</h1>
          </div>
          <div class="table">
            <div class="tr th">
              <div>Subcategory<svg class="sort" viewBox="0 0 18 9"><path d="M0 9L9 0 18 9Z" fill="#252423" /></svg></div>
              <div class="hc">Color</div><div class="n">Sum of Quantity</div><div class="s">Sum of Sales</div><div class="n">Profit Margin</div>
            </div>
            {#each rows as [sub, color, qty, sales, margin, good]}
              <div class="tr">
                <div>{sub}</div><div class="c {color.toLowerCase()}">{color}</div><div class="n d">{qty}</div><div class="n d">{sales}</div>
                <div class="n m d">{margin}<svg viewBox="0 0 36 36">{#if good}<circle cx="18" cy="18" r="16.8" fill="#64b078" stroke="#2e5c3c" stroke-width="1.6" />{:else}<path d="M18 2L34 18 18 34 2 18Z" fill="#f4695c" stroke="#a31208" stroke-width="1.5" />{/if}</svg></div>
              </div>
            {/each}
            <div class="tr total"><div>Total</div><div></div><div class="n">71,880</div><div class="n">$6,40,69,033</div><div class="n">-0.68%</div></div>
          </div>
        </div>
        <div class="filters">
          <svg class="dbl" viewBox="0 0 16 16"><path d="M8 .5L1 8l7 7.5M15 .5L8 8l7 7.5" fill="none" stroke="#323130" stroke-width="1.3" /></svg>
          <svg class="fun" viewBox="0 0 16 16"><path d="M14.5 .8V15.2L8 10.5H1V5.8H8Z" fill="none" stroke="#323130" stroke-width="1.5" /></svg>
          <span>Filters</span>
        </div>
      </div>
      <div class="pages">
        <div class="views">
          <svg class="mon" viewBox="0 0 26 20"><path d="M1 1H25V14.5H1ZM13 14.5V19M8.5 19H17.5" fill="none" stroke="#605e5c" stroke-width="1.5" /></svg>
          <svg class="phone" viewBox="0 0 16 26"><rect x="1" y="1" width="14" height="24" rx="1" fill="none" stroke="#605e5c" stroke-width="1.6" /><path d="M6.5 22h3" stroke="#605e5c" stroke-width="1.6" /></svg>
          <svg class="arr" viewBox="0 0 6 12"><path d="M6 0V12L0 6Z" fill="#c8c6c4" /></svg>
          <svg class="arr2" viewBox="0 0 6 12"><path d="M0 0V12L6 6Z" fill="#c8c6c4" /></svg>
        </div>
        {#each pagesList as [n, w]}<div class="pg" style:width="{w}px">{n}</div>{/each}
        <div class="pg cur">
          <svg viewBox="0 0 16 14"><path d="M1 9Q3 3 8 3T15 9M1 1L14 13.5M5 9a3 3 0 0 0 5 2M8 6a3 3 0 0 1 3 3" fill="none" stroke="#605e5c" stroke-width="1" /></svg>Product Details<b>x</b>
        </div>
        <div class="add"><svg viewBox="0 0 14 14"><path d="M7 0V14M0 7H14" stroke="#fff" stroke-width="3.2" /></svg></div>
      </div>
    </div>

    <aside class="viz">
      <div class="ph"><h2>Visualizations</h2><svg class="dbl" viewBox="0 0 16 16"><path d="M1 .5L8 8l-7 7.5M8 .5L15 8l-7 7.5" fill="none" stroke="#323130" stroke-width="1.3" /></svg></div>
      <h3>Build visual</h3>
      <div class="modes">
        <div class="build"><svg viewBox="0 0 32 32"><path d="M1 2H25" stroke="#252423" stroke-width="1.3" /><path d="M1.5 8.5h29v9h-29zM1.5 21.5h29v9h-29z" fill="#117865" stroke="#111" stroke-width="1.5" stroke-dasharray="2 1.3" /></svg></div>
        <svg class="fmt" viewBox="0 0 32 32"><path d="M6 30.5H1.5V1.5H14L23.5 11V13M14 1.5V11H23.5" fill="none" stroke="#3b3a39" stroke-width="1.5" /><path d="M30.5 12.5L21 24.5 18 22Z" fill="#f3f2f1" stroke="#3b3a39" stroke-width="1.5" /><path d="M18 22Q14.5 22 13.5 26 12.5 29.5 9 29.5 16 32 20 29 22 27 21 24.5Z" fill="#f3f2f1" stroke="#3b3a39" stroke-width="1.5" /></svg>
      </div>
      <svg class="notch" viewBox="0 0 225 12"><path d="M0 10.5H20.5L30.5 1.2 40.5 10.5H225" fill="none" stroke="#8a8886" stroke-width="1" /></svg>
      <div class="grid">
        {#each visuals as v}<svg viewBox="0 0 24 24">{@html v}</svg>{/each}
      </div>
      <div class="dots"><i></i><i></i><i></i></div>
      <div class="wells">
        <p class="vals">Values</p>
        <div class="well">Add data fields here</div>
        <p class="drill">Drill through</p>
        <div class="opt">Cross-report<span class="tog"><i></i>Off</span></div>
        <div class="opt second">Keep all filters<span class="tog on">On<i></i></span></div>
        <div class="well big">
          <div class="card">
            <div class="cn"><span>Category</span>
              <svg class="c1" viewBox="0 0 16 9"><path d="M1 1L8 8 15 1" fill="none" stroke="#323130" stroke-width="1.2" /></svg>
              <svg class="c2" viewBox="0 0 12 12"><path d="M1 1L11 11M11 1L1 11" stroke="#323130" stroke-width="1.2" /></svg>
              <svg class="c3" viewBox="0 0 14 16"><path d="M1.5 7.5H12.5V15H1.5ZM3.5 7V4.5Q3.5 1 7 1T10.5 4.5" fill="none" stroke="#323130" stroke-width="1.2" /></svg>
            </div>
            <div>is Bikes</div>
          </div>
        </div>
      </div>
    </aside>

    <aside class="data">
      <div class="ph"><h2>Data</h2><svg class="dbl" viewBox="0 0 16 16"><path d="M1 .5L8 8l-7 7.5M8 .5L15 8l-7 7.5" fill="none" stroke="#323130" stroke-width="1.3" /></svg></div>
      <div class="dsearch"><svg viewBox="0 0 18 18"><circle cx="7.5" cy="7.5" r="6.5" fill="none" stroke="#605e5c" stroke-width="1.2" /><path d="M12 12L17.5 17.5" stroke="#605e5c" stroke-width="1.3" /></svg>Search</div>
      {#each fields as [n, k]}
        <div class="field">
          <svg class="fc" viewBox="0 0 9 16"><path d="M1 1l7 7-7 7" fill="none" stroke="#484644" stroke-width="1.2" /></svg>
          <svg class="fi" viewBox="0 0 18 18">{@html fieldIcons[k]}</svg>{n}
        </div>
      {/each}
    </aside>
  </div>

  <footer>
    <span>Page 4 of 4</span>
    <div class="zoom">
      <b class="minus"></b>
      <svg class="slider" viewBox="0 0 126 16"><path d="M0 7.5H126M62.5 4V11" stroke="#605e5c" /><path d="M47 1h5v15h-5z" fill="#605e5c" /></svg>
      <svg class="plus" viewBox="0 0 10 10"><path d="M5 0V10M0 5H10" stroke="#484644" stroke-width="1.6" /></svg>
      <span class="pct">82%</span>
      <svg class="fit" viewBox="0 0 21 18"><path d="M1 1H20V17H1ZM4 8V4.5H8M13 4.5H17V8M4 11V14H8M13 14H17V11" fill="none" stroke="#605e5c" stroke-width="1.5" /></svg>
    </div>
  </footer>
</div>

<style>
  :global(body) { margin: 0; overflow: hidden; }
  * { box-sizing: border-box; }
  .app { width: 1919px; height: 1012px; display: flex; flex-direction: column; overflow: hidden; background: #f3f2f1; color: #252423; font: 14px/20px "Open Sans", "Noto Sans", sans-serif; letter-spacing: -0.3px; }
  svg { display: block; flex: none; }
  h1, h2, h3, h6, p { margin: 0; }

  .title { height: 43px; flex: none; background: #3b3a39; color: #fff; display: flex; align-items: center; }
  .quick { width: 805px; display: flex; align-items: center; padding-left: 20px; }
  .save { width: 20px; height: 20px; }
  .undo { width: 18px; height: 20px; margin-left: 19px; }
  .redo { width: 18px; height: 20px; margin-left: 19px; }
  .file { margin-left: 12px; width: 276px; white-space: nowrap; padding-top: 5px; letter-spacing: 0.16px; }
  .file i { font-style: normal; font-size: 13px; margin: 0 1px; }
  .caret { width: 10px; height: 6px; margin: 3px 0 0 8px; }
  .tsearch { width: 500px; height: 30px; background: #d4d3d1; border-radius: 2px; color: #2a675b; display: flex; align-items: center; padding-left: 22px; gap: 14px; font-size: 16px; letter-spacing: -0.05px; margin-bottom: 1px; }
  .tsearch svg { width: 20px; height: 20px; }
  .win { margin-left: auto; display: flex; align-items: center; padding-right: 19px; letter-spacing: 0.1px; }
  .avatar { width: 26px; height: 26px; margin-left: 12px; }
  .wmin, .wmax, .wclose { width: 14px; height: 14px; margin: 4px 0 0 41px; }
  .wmin { margin-left: 40px; }

  .top { height: 157px; flex: none; background: #fafafa; position: relative; z-index: 2; box-shadow: 0 1px 5px rgba(0, 0, 0, .22); }
  .tabs { height: 45px; display: flex; padding-left: 28.5px; font-size: 16.5px; letter-spacing: 0; }
  .tab { padding-top: 10px; }
  .tab span { display: inline-block; height: 28px; white-space: nowrap; }
  .tab .on { font-weight: 700; letter-spacing: -0.4px; border-bottom: 3px solid #117865; }
  .share { margin: 5px 6px 0 auto; width: 105px; height: 30px; border: 0; border-radius: 4px; background: #117865; color: #fff; display: flex; align-items: center; padding: 0 0 0 9px; font: 15px "Open Sans", sans-serif; letter-spacing: -0.4px; }
  .shicon { width: 20px; height: 18px; margin-right: 10px; }
  .share span { width: 37px; }
  .shchev { width: 12px; height: 8px; margin-left: 7px; }

  .ribbon { height: 110px; display: flex; }
  .ribbon section { height: 110px; border-right: 1px solid #d2d0ce; display: flex; flex-direction: column; justify-content: space-between; align-items: center; }
  h6 { font-size: 12px; font-weight: 400; line-height: 13px; letter-spacing: -0.2px; color: #323130; }
  .clip { width: 201px; }
  .clipbody { display: flex; width: 200px; height: 90px; color: #c8c6c4; }
  .paste { width: 63px; padding-left: 15px; display: flex; flex-direction: column; }
  .paste svg { width: 40px; height: 40px; margin: 5px 0 4px 0; }
  .paste span { margin-left: 2px; }
  .cmds { display: flex; flex-direction: column; }
  .cmds div { height: 30px; flex: none; display: flex; align-items: center; gap: 5px; white-space: nowrap; letter-spacing: -0.02px; }
  .cmds svg { width: 20px; height: 20px; margin-left: 2px; }
  .grp { align-items: stretch; }
  .grp h6 { text-align: center; }
  .items { display: flex; width: 100%; }
  .btn { display: flex; flex-direction: column; align-items: center; flex: none; letter-spacing: -0.22px; }
  .btn .ico { width: 40px; height: 40px; margin: 5px 0 4px; overflow: visible; }
  .btn span { white-space: nowrap; display: flex; align-items: center; height: 20px; }
  .chev { width: 8px; height: 6px; margin: 3px 0 0 3px; }
  .chev.solo { margin-left: 0; }
  .off { color: #c8c6c4; }
  .collapse { width: 12px; height: 8px; margin: 97px 0 0 361px; }

  .main { height: 790px; flex: none; display: flex; }
  .rail { width: 51px; border-right: 1px solid #dddbda; }
  .mode { height: 50px; border-left: 3px solid transparent; padding: 13px 0 0 10px; }
  .mode.active { border-color: #117865; }
  .mode svg { width: 24px; height: 24px; overflow: visible; }

  .center { width: 1417px; display: flex; flex-direction: column; }
  .stage { height: 746px; display: flex; background: #fff; }
  .canvas { width: 1312px; height: 738px; margin-left: 32px; border: 2px dotted #605e5c; border-top: 0; padding: 21px 0 0 12px; }
  .headrow { display: flex; }
  .back { width: 32px; height: 32px; margin: 25px 16px 0 0; }
  h1 { width: 1234px; height: 83px; background: #e6e6e6; text-align: center; font: 500 53px/100px Roboto, sans-serif; letter-spacing: 1.2px; color: #252423; }
  .table { width: 835px; margin: 56px 0 0 69px; font-size: 24.5px; line-height: 38.9px; letter-spacing: 0.58px; }
  .tr { display: grid; grid-template-columns: 197px 86px 208px 174px 170px; height: 38.8px; color: #252423; }
  .tr > div { padding: 2px 6px 0; white-space: nowrap; height: 100%; border-bottom: 1px solid #ebebeb; }
  .tr > div:first-child { padding-left: 5px; }
  .tr:nth-child(odd) > div { background: #ececec; border-color: #e3e3e3; }
  .tr.th { height: 56px; border-bottom: 1px solid #2e93f5; }
  .tr.th > div { background: none; border: 0; padding-top: 2px; letter-spacing: 0.63px; }
  .tr.th > .hc { padding-left: 4px; }
  .sort { width: 18px; height: 9px; margin: -1px 0 0 1px; }
  .tr .n { text-align: right; padding-right: 5px; }
  .tr .s { text-align: left; padding-left: 5px; }
  .tr > .d { letter-spacing: 0.3px; }
  .tr > .m { display: flex; justify-content: flex-end; }
  .m svg { width: 36px; height: 36px; margin: -1px -1px 0 6px; }
  .tr > .c { padding-left: 4px; }
  .tr > .black { background: #000 !important; color: #fff; }
  .tr > .silver { background: #c0c0c0 !important; color: #000; }
  .tr > .red { background: #f00 !important; color: #fff; }
  .tr > .yellow { background: #ff0 !important; color: #000; }
  .tr > .blue { background: #00f !important; color: #fff; }
  .tr.total { font-weight: 700; border-top: 2px solid #7cc0f8; }
  .tr.total > div { background: none; border: 0; padding-top: 1px; letter-spacing: 0.3px; }
  .tr.total > .n { letter-spacing: 1.15px; padding-right: 4px; }

  .filters { margin-left: auto; width: 41px; border-left: 1px solid #b3b0ad; display: flex; flex-direction: column; align-items: center; padding-top: 16px; }
  .dbl { width: 16px; height: 16px; }
  .fun { width: 16px; height: 16px; margin: 19px 0 10px 7px; }
  .filters span { writing-mode: vertical-rl; font-size: 18px; font-weight: 600; letter-spacing: -0.1px; }

  .pages { height: 44px; display: flex; letter-spacing: 0; }
  .views { width: 160px; border-right: 1px solid #b3b0ad; display: flex; align-items: flex-start; }
  .mon { width: 30px; height: 38px; margin-left: 12px; padding: 9px 2px 9px; border-bottom: 3px solid #117865; }
  .phone { width: 16px; height: 26px; margin: 6px 0 0 32px; }
  .arr, .arr2 { width: 6px; height: 11px; margin: 16px 0 0 26px; }
  .arr2 { margin-left: 23px; }
  .pg { background: #fff; border-right: 1px solid #c8c6c4; display: flex; align-items: center; justify-content: center; white-space: nowrap; padding-top: 1px; flex: none; }
  .pg.cur { width: 155px; font-weight: 600; border-bottom: 5px solid #117865; padding: 6px 0 0 0; position: relative; letter-spacing: -0.12px; }
  .pg.cur svg { width: 16px; height: 14px; margin: 4px 4px 0 0; }
  .cur b { position: absolute; right: 5px; top: 2px; font-size: 13px; font-weight: 600; }
  .add { width: 49px; background: #117865; display: flex; align-items: center; justify-content: center; padding-bottom: 3px; }
  .add svg { width: 14px; height: 14px; }

  .viz { width: 227px; border-left: 1px solid #dddbda; border-right: 1px solid #dddbda; display: flex; flex-direction: column; }
  .ph { display: flex; justify-content: space-between; align-items: center; padding: 13px 10px 0 10px; height: 37px; flex: none; }
  h2 { font-size: 18.5px; line-height: 24px; font-weight: 600; letter-spacing: 0; }
  h3 { font-size: 14px; font-weight: 600; line-height: 20px; margin: 11px 0 4px 10px; letter-spacing: 0; }
  .modes { display: flex; margin-left: 10px; height: 45px; flex: none; }
  .build { width: 40px; height: 40px; background: #d2d0ce; border-radius: 3px; padding: 4px; }
  .build svg { width: 32px; height: 32px; }
  .fmt { width: 32px; height: 32px; margin: 4px 0 0 47px; }
  .notch { width: 225px; height: 12px; }
  .grid { display: grid; grid-template-columns: repeat(6, 35px); grid-auto-rows: 35px; margin: 13px 0 0 14px; }
  .grid svg { width: 24px; height: 24px; overflow: visible; }
  .dots { display: flex; gap: 6px; margin: 8px 0 0 17px; }
  .dots i { width: 2px; height: 2px; background: #252423; }
  .wells { border-top: 1px solid #dddbda; margin-top: 24px; letter-spacing: 0.05px; }
  .vals { margin: 11px 0 6px 15px; }
  .well { margin: 0 7px 0 5px; height: 35px; background: #fff; border: 1px dashed #c0bebc; border-radius: 3px; padding: 7px 12px; }
  .drill { margin: 14px 0 11px 15px; font-weight: 600; color: #484644; letter-spacing: 0.05px; }
  .opt { display: flex; justify-content: space-between; align-items: center; padding: 0 27px 0 15px; height: 20px; }
  .opt.second { margin: 14px 0 13px; }
  .tog { width: 40px; height: 20px; border: 1px solid #8a8886; border-radius: 10px; background: #fff; color: #605e5c; font-size: 11px; display: flex; align-items: center; justify-content: center; gap: 2px; letter-spacing: 0; }
  .tog i { width: 10px; height: 10px; border-radius: 50%; background: #605e5c; }
  .tog.on { background: #117865; border-color: #117865; color: #fff; gap: 4px; }
  .tog.on i { background: #fff; }
  .well.big { height: 70px; padding: 2px 3px; }
  .card { height: 53px; background: #fafafa; border: 1px solid #dddbda; border-radius: 2px; padding: 2px 9px; line-height: 23px; }
  .cn { display: flex; align-items: center; height: 23px; }
  .cn span { width: 122px; }
  .c1 { width: 16px; height: 9px; }
  .c2 { width: 12px; height: 12px; margin-left: 11px; }
  .c3 { width: 14px; height: 16px; margin-left: 12px; }

  .data { width: 224px; }
  .data .ph { padding: 13px 9px 0 10px; }
  .dsearch { height: 31px; margin: 20px 4px 9.5px 5px; background: #fff; border: 1px solid #c8c6c4; border-bottom-color: #605e5c; border-radius: 4px; display: flex; align-items: center; padding: 1px 0 0 15px; gap: 8px; font-size: 16px; letter-spacing: -0.1px; color: #797775; }
  .dsearch svg { width: 18px; height: 18px; }
  .field { height: 30px; display: flex; align-items: center; padding-left: 18px; font-size: 15px; letter-spacing: -0.43px; color: #323130; white-space: nowrap; }
  .fc { width: 9px; height: 16px; margin-right: 8px; }
  .fi { width: 18px; height: 18px; margin-right: 5px; overflow: visible; }

  footer { height: 22px; flex: none; border-top: 1px solid #dddbda; display: flex; justify-content: space-between; color: #484644; padding: 6px 0 0 5px; letter-spacing: 0.1px; }
  .zoom { display: flex; align-items: flex-start; }
  .minus { width: 5px; height: 2px; background: #484644; margin: 8px 6px 0 0; }
  .slider { width: 126px; height: 16px; margin-top: 1px; }
  .plus { width: 10px; height: 10px; margin: 3px 17px 0 5px; }
  .pct { width: 52px; font-size: 15px; color: #605e5c; letter-spacing: -0.5px; line-height: 17px; }
  .fit { width: 21px; height: 18px; margin: 1px 21px 0 0; }
</style>
